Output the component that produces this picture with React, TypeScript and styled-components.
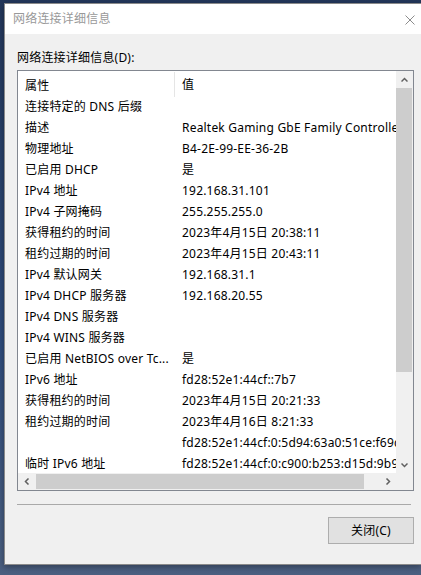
import React from "react";
import styled, { createGlobalStyle } from "styled-components";

const Global = createGlobalStyle`
  html, body {
    margin: 0;
    padding: 0;
    width: 421px;
    height: 575px;
    overflow: hidden;
    background: linear-gradient(180deg, #23375a 0%, #2f4c7c 60%, #4b5f80 100%);
  }
  * { box-sizing: border-box; }
`;

const FONT = `"Noto Sans", "Noto Sans CJK SC", sans-serif`;

const Window = styled.div`
  margin: 3px 0 0 4px;
  width: 417px;
  height: 562px;
  background: #f0f0f0;
  border: 1px solid #8a8a8a;
  border-right: none;
  box-shadow: 0 2px 6px rgba(0, 0, 0, 0.35);
  display: flex;
  flex-direction: column;
  font-family: ${FONT};
  font-size: 12px;
  letter-spacing: 0.2px;
  color: #000;
`;

const TitleBar = styled.div`
  height: 30px;
  flex: none;
  background: #fff;
  display: flex;
  align-items: center;
  justify-content: space-between;
  padding: 0 6px 0 8px;
`;

const Title = styled.span`
  color: #999;
  font-size: 12px;
  line-height: 16px;
`;

const CloseBtn = styled.div`
  width: 10px;
  height: 10px;
  display: flex;
  margin-top: 1px;
`;

const Content = styled.div`
  flex: 1;
  display: flex;
  flex-direction: column;
  padding: 16px 7px 0 12px;
`;

const Label = styled.div`
  line-height: 16px;
  height: 16px;
  margin-bottom: 4px;
`;

const ListBox = styled.div`
  height: 421px;
  border: 1px solid #828790;
  background: #fff;
  display: grid;
  grid-template-columns: 1fr 17px;
  grid-template-rows: 1fr 17px;
`;

const ListView = styled.div`
  overflow: hidden;
  display: flex;
  flex-direction: column;
`;

const Header = styled.div`
  height: 25px;
  flex: none;
  display: grid;
  grid-template-columns: 157px 1fr;
  align-items: center;
`;

const HeaderCell = styled.div<{ $divider?: boolean }>`
  height: 100%;
  display: flex;
  align-items: center;
  padding-left: 7px;
  padding-top: 1px;
  border-right: ${(p) => (p.$divider ? "1px solid #e5e5e5" : "none")};
  margin: ${(p) => (p.$divider ? "1px 0 0 0" : "0")};
`;

const Row = styled.div`
  height: 21px;
  flex: none;
  display: grid;
  grid-template-columns: 157px 1fr;
  line-height: 21px;
  white-space: nowrap;
`;

const Cell = styled.div`
  padding-left: 7px;
  overflow: visible;
`;

const VScroll = styled.div`
  background: #f0f0f0;
  display: flex;
  flex-direction: column;
`;

const HScroll = styled.div`
  background: #f0f0f0;
  display: flex;
`;

const ArrowBtn = styled.div`
  width: 17px;
  height: 17px;
  flex: none;
  display: flex;
  align-items: center;
  justify-content: center;
`;

const VTrack = styled.div`
  flex: 1;
  display: flex;
  flex-direction: column;
  padding: 0 1px 0 0;
`;

const VThumb = styled.div`
  height: 284px;
  background: #cdcdcd;
`;

const HTrack = styled.div`
  flex: 1;
  display: flex;
  padding: 1px 0;
`;

const HThumb = styled.div`
  width: 328px;
  margin-left: 1px;
  background: #cdcdcd;
`;

const Corner = styled.div`
  background: #f0f0f0;
`;

const Separator = styled.div`
  height: 1px;
  background: #a9a9a9;
  margin: 13px 3px 12px 0;
`;

const ButtonRow = styled.div`
  display: flex;
  justify-content: flex-end;
`;

const Button = styled.div`
  width: 86px;
  height: 27px;
  background: #e1e1e1;
  border: 1px solid #adadad;
  display: flex;
  align-items: center;
  justify-content: center;
  line-height: 16px;
`;

const Chevron = ({ dir }: { dir: "up" | "down" | "left" | "right" }) => {
  const paths: Record<string, string> = {
    up: "M0.5 4.5 L3.5 1.5 L6.5 4.5",
    down: "M0.5 1.5 L3.5 4.5 L6.5 1.5",
    left: "M4.5 0.5 L1.5 3.5 L4.5 6.5",
    right: "M1.5 0.5 L4.5 3.5 L1.5 6.5",
  };
  const horiz = dir === "left" || dir === "right";
  return (
    <svg width={horiz ? 6 : 7} height={horiz ? 7 : 6} viewBox={horiz ? "0 0 6 7" : "0 0 7 6"}>
      <path d={paths[dir]} fill="none" stroke="#606060" strokeWidth="1.5" />
    </svg>
  );
};

const rows: [string, string][] = [
  ["连接特定的 DNS 后缀", ""],
  ["描述", "Realtek Gaming GbE Family Controller"],
  ["物理地址", "B4-2E-99-EE-36-2B"],
  ["已启用 DHCP", "是"],
  ["IPv4 地址", "192.168.31.101"],
  ["IPv4 子网掩码", "255.255.255.0"],
  ["获得租约的时间", "2023年4月15日 20:38:11"],
  ["租约过期的时间", "2023年4月15日 20:43:11"],
  ["IPv4 默认网关", "192.168.31.1"],
  ["IPv4 DHCP 服务器", "192.168.20.55"],
  ["IPv4 DNS 服务器", ""],
  ["IPv4 WINS 服务器", ""],
  ["已启用 NetBIOS over Tc...", "是"],
  ["IPv6 地址", "fd28:52e1:44cf::7b7"],
  ["获得租约的时间", "2023年4月15日 20:21:33"],
  ["租约过期的时间", "2023年4月16日 8:21:33"],
  ["", "fd28:52e1:44cf:0:5d94:63a0:51ce:f69c"],
  ["临时 IPv6 地址", "fd28:52e1:44cf:0:c900:b253:d15d:9b9a"],
];

export default function App() {
  return (
    <>
      <Global />
      <Window>
        <TitleBar>
          <Title>网络连接详细信息</Title>
          <CloseBtn>
            <svg width="10" height="10" viewBox="0 0 10 10">
              <path d="M0.5 0.5 L9.5 9.5 M9.5 0.5 L0.5 9.5" stroke="#8c8c8c" strokeWidth="1" fill="none" />
            </svg>
          </CloseBtn>
        </TitleBar>
        <Content>
          <Label>网络连接详细信息(D):</Label>
          <ListBox>
            <ListView>
              <Header>
                <HeaderCell $divider>属性</HeaderCell>
                <HeaderCell>值</HeaderCell>
              </Header>
              {rows.map(([k, v], i) => (
                <Row key={i}>
                  <Cell>{k}</Cell>
                  <Cell>{v}</Cell>
                </Row>
              ))}
            </ListView>
            <VScroll>
              <ArrowBtn>
                <Chevron dir="up" />
              </ArrowBtn>
              <VTrack>
                <VThumb />
              </VTrack>
              <ArrowBtn>
                <Chevron dir="down" />
              </ArrowBtn>
            </VScroll>
            <HScroll>
              <ArrowBtn>
                <Chevron dir="left" />
              </ArrowBtn>
              <HTrack>
                <HThumb />
              </HTrack>
              <ArrowBtn>
                <Chevron dir="right" />
              </ArrowBtn>
            </HScroll>
            <Corner />
          </ListBox>
          <Separator />
          <ButtonRow>
            <Button>关闭(C)</Button>
          </ButtonRow>
        </Content>
      </Window>
    </>
  );
}
